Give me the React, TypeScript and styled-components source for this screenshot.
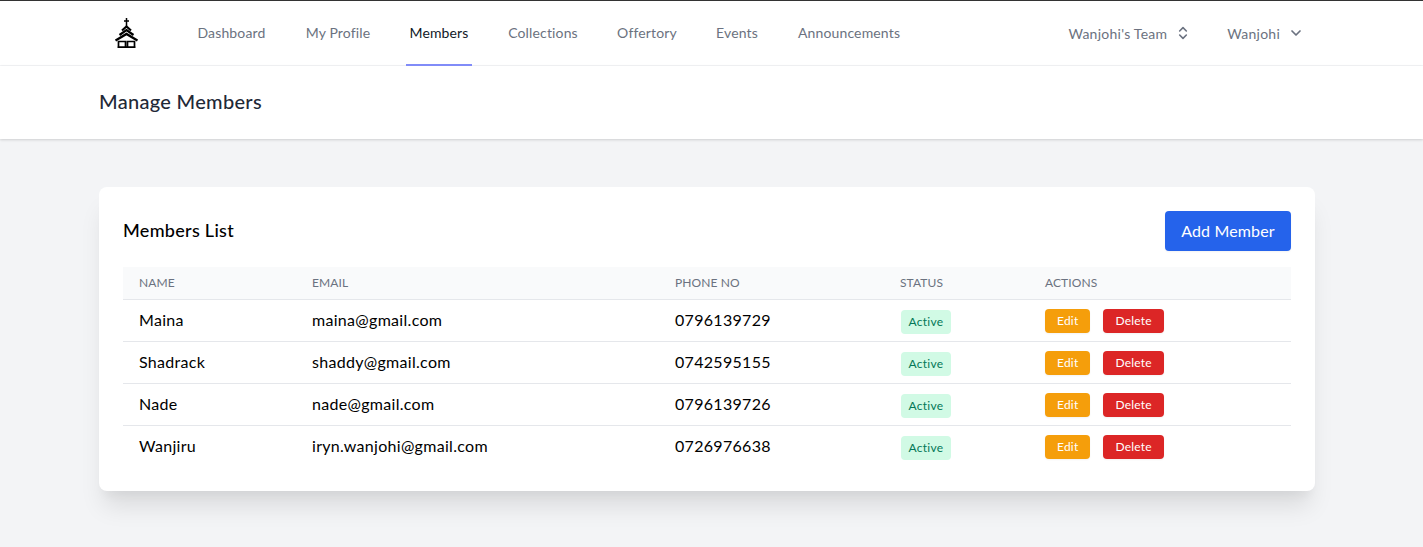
import styled, { createGlobalStyle } from "styled-components";
import { ChevronDown, ChevronsUpDown } from "lucide-react";

const NAV_LINKS = [
  { label: "Dashboard", width: 77 },
  { label: "My Profile", width: 72 },
  { label: "Members", width: 66 },
  { label: "Collections", width: 78 },
  { label: "Offertory", width: 66 },
  { label: "Events", width: 50 },
  { label: "Announcements", width: 110 },
];

const MEMBERS = [
  { name: "Maina", email: "maina@gmail.com", phone: "0796139729" },
  { name: "Shadrack", email: "shaddy@gmail.com", phone: "0742595155" },
  { name: "Nade", email: "nade@gmail.com", phone: "0796139726" },
  { name: "Wanjiru", email: "iryn.wanjohi@gmail.com", phone: "0726976638" },
];

function ChurchLogo() {
  return (
    <svg width="23" height="30" viewBox="0 0 23 30" fill="none" stroke="#000">
      <path d="M11.500 0v8M9 3h5" strokeWidth="1.500" />
      <path d="M7 12.500 11.500 8.500 16 12.500" strokeWidth="2.200" />
      <path d="M4.500 17 11.500 12 18.500 17" strokeWidth="2.200" />
      <path d="M0.500 22.500 11.500 16 22.500 22.500" strokeWidth="2.400" />
      <path d="M3.500 29.200V23.500h7v5.700M12.500 29.200V23.500h7v5.700M2.500 29.200h18" strokeWidth="1.700" />
    </svg>
  );
}

export default function App() {
  return (
    <>
      <GlobalStyle />
      <TopBar>
        <Container>
          <NavLeft>
            <LogoBox>
              <ChurchLogo />
            </LogoBox>
            <Menu>
              {NAV_LINKS.map((link) => (
                <MenuItem key={link.label} $width={link.width} $active={link.label === "Members"}>
                  {link.label}
                </MenuItem>
              ))}
            </Menu>
          </NavLeft>
          <UserArea>
            <Dropdown>
              Wanjohi's Team
              <ChevronsUpDown size={16} strokeWidth={2.4} />
            </Dropdown>
            <Dropdown>
              Wanjohi
              <ChevronDown size={16} strokeWidth={2.6} />
            </Dropdown>
          </UserArea>
        </Container>
      </TopBar>
      <PageHeader>
        <Container>
          <PageTitle>Manage Members</PageTitle>
        </Container>
      </PageHeader>
      <Main>
        <Card>
          <CardHeader>
            <CardTitle>Members List</CardTitle>
            <AddButton>Add Member</AddButton>
          </CardHeader>
          <TableHead>
            <span>Name</span>
            <span>Email</span>
            <span>Phone No</span>
            <span>Status</span>
            <span>Actions</span>
          </TableHead>
          {MEMBERS.map((member) => (
            <Row key={member.email}>
              <span>{member.name}</span>
              <span>{member.email}</span>
              <span>{member.phone}</span>
              <StatusCell>
                <Badge>Active</Badge>
              </StatusCell>
              <Actions>
                <ActionButton $color="#f59e0b">Edit</ActionButton>
                <ActionButton $color="#dc2626">Delete</ActionButton>
              </Actions>
            </Row>
          ))}
        </Card>
      </Main>
    </>
  );
}

const GlobalStyle = createGlobalStyle`
  * {
    box-sizing: border-box;
  }

  body {
    margin: 0;
    background: #f3f4f6;
    font-family: "Lato", "Open Sans", sans-serif;
    color: #000;
  }
`;

const TopBar = styled.nav`
  height: 66px;
  background: #fff;
  border-top: 1px solid #333;
  border-bottom: 1px solid #f3f4f6;
  padding-right: 9px;
`;

const Container = styled.div`
  width: 1216px;
  margin: 0 auto;
  height: 100%;
  display: flex;
  justify-content: space-between;
  align-items: stretch;
`;

const NavLeft = styled.div`
  display: flex;
`;

const LogoBox = styled.div`
  width: 54px;
  padding-left: 16px;
  display: flex;
  align-items: center;
`;

const Menu = styled.div`
  display: flex;
  margin-left: 40px;
  gap: 32px;
`;

const MenuItem = styled.a<{ $active?: boolean; $width: number }>`
  display: inline-flex;
  align-items: center;
  justify-content: center;
  width: ${(p) => p.$width}px;
  font-size: 14px;
  line-height: 20px;
  letter-spacing: 0.15px;
  color: ${(p) => (p.$active ? "#111827" : "#6b7280")};
  border-bottom: 2px solid ${(p) => (p.$active ? "#818cf8" : "transparent")};
  margin-bottom: -1px;
`;

const UserArea = styled.div`
  display: flex;
  align-items: center;
  gap: 36px;
  padding-right: 11px;
`;

const Dropdown = styled.div`
  display: flex;
  align-items: center;
  gap: 8px;
  font-size: 14px;
  letter-spacing: 0.25px;
  color: #6b7280;
`;

const PageHeader = styled.header`
  height: 73px;
  background: #fff;
  box-shadow: 0 1px 3px 0 rgba(0, 0, 0, 0.1), 0 1px 2px 0 rgba(0, 0, 0, 0.06);
  padding-right: 9px;
`;

const PageTitle = styled.h2`
  margin: 0 0 4px;
  align-self: center;
  font-size: 20px;
  line-height: 28px;
  font-weight: 500;
  letter-spacing: 0.3px;
  color: #1f2937;
`;

const Main = styled.main`
  padding: 48px 9px 60px 0;
`;

const Card = styled.section`
  width: 1216px;
  margin: 0 auto;
  padding: 24px;
  background: #fff;
  border-radius: 8px;
  box-shadow: 0 20px 25px -5px rgba(0, 0, 0, 0.1), 0 10px 10px -5px rgba(0, 0, 0, 0.04);
`;

const CardHeader = styled.div`
  display: flex;
  justify-content: space-between;
  align-items: center;
  margin-bottom: 16px;
`;

const CardTitle = styled.h3`
  margin: 0 0 2px;
  font-size: 18px;
  line-height: 28px;
  font-weight: 500;
  letter-spacing: 0.3px;
`;

const AddButton = styled.button`
  height: 40px;
  width: 126px;
  padding: 0 0 2px;
  border: none;
  border-radius: 4px;
  background: #2563eb;
  color: #fff;
  font: inherit;
  letter-spacing: 0.15px;
  box-shadow: 0 1px 2px 0 rgba(0, 0, 0, 0.05);
`;

const columns = "173px 363px 225px 145px 1fr";

const TableHead = styled.div`
  display: grid;
  grid-template-columns: ${columns};
  align-items: center;
  height: 33px;
  background: #f9fafb;
  border-bottom: 1px solid #e5e7eb;
  font-size: 12px;
  text-transform: uppercase;
  letter-spacing: 0.1px;
  color: #6b7280;

  span {
    padding: 0 0 2px 16px;
  }
`;

const Row = styled.div`
  display: grid;
  grid-template-columns: ${columns};
  align-items: center;
  height: 42px;
  border-bottom: 1px solid #e5e7eb;
  font-size: 16px;
  letter-spacing: 0.3px;

  &:last-child {
    height: 41px;
    border-bottom: none;
  }

  > span {
    padding: 0 0 2px 16px;
  }
`;

const StatusCell = styled.div`
  display: flex;
  padding: 2px 0 0 17px;
`;

const Badge = styled.span`
  display: inline-flex;
  align-items: center;
  justify-content: center;
  width: 50px;
  height: 24px;
  border-radius: 4px;
  background: #d1fae5;
  color: #047857;
  font-size: 12px;
`;

const Actions = styled.div`
  display: flex;
  gap: 13px;
  padding-left: 16px;
`;

const ActionButton = styled.button<{ $color: string }>`
  height: 24px;
  padding: 0 12px;
  border: none;
  border-radius: 4px;
  background: ${(p) => p.$color};
  color: #fff;
  font: inherit;
  font-size: 12px;
  letter-spacing: 0.2px;
  box-shadow: 0 1px 2px 0 rgba(0, 0, 0, 0.05);
`;
